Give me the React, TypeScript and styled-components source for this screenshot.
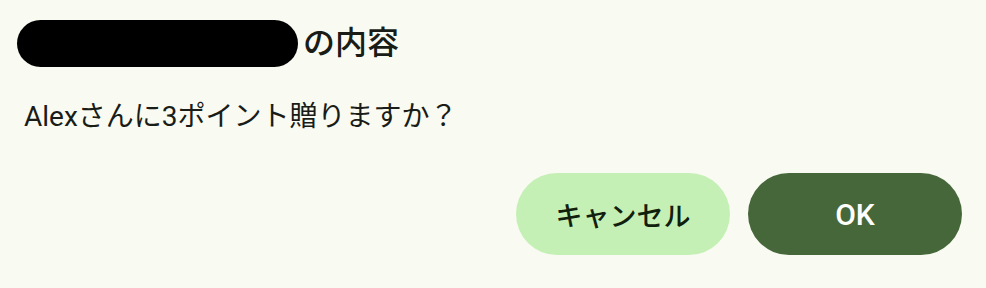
import React from "react";
import styled, { createGlobalStyle } from "styled-components";

const GlobalStyle = createGlobalStyle`
  html, body {
    margin: 0;
    padding: 0;
    background: #f9fbf2;
  }
  body {
    font-family: Roboto, "Noto Sans CJK JP", sans-serif;
    color: #1a1c17;
  }
`;

const Dialog = styled.div`
  width: 986px;
  height: 288px;
  box-sizing: border-box;
  padding: 20px 24px 0 17px;
  display: flex;
  flex-direction: column;
  background: #f9fbf2;
`;

const TitleRow = styled.div`
  display: flex;
  align-items: center;
  height: 47px;
`;

const Redacted = styled.span`
  display: inline-block;
  width: 281px;
  height: 47px;
  border-radius: 24px;
  background: #000;
`;

const TitleText = styled.h2`
  margin: 0 0 0 5px;
  font-size: 32px;
  font-weight: 500;
  line-height: 47px;
  letter-spacing: 0;
`;

const Message = styled.p`
  margin: 30px 0 0 7px;
  font-size: 28px;
  line-height: 40px;
  font-weight: 400;
`;

const Actions = styled.div`
  display: flex;
  justify-content: flex-end;
  gap: 18px;
  margin-top: 36px;
`;

const ActionButton = styled.button<{ $primary?: boolean }>`
  width: 214px;
  height: 82px;
  border: none;
  border-radius: 41px;
  padding: 0;
  font-family: Roboto, "Noto Sans CJK JP", sans-serif;
  font-size: ${(p) => (p.$primary ? "30px" : "27px")};
  font-weight: 500;
  cursor: pointer;
  background: ${(p) => (p.$primary ? "#46673a" : "#c5f0b5")};
  color: ${(p) => (p.$primary ? "#ffffff" : "#10200c")};
`;

export default function App() {
  return (
    <>
      <GlobalStyle />
      <Dialog>
        <TitleRow>
          <Redacted />
          <TitleText>の内容</TitleText>
        </TitleRow>
        <Message>Alexさんに3ポイント贈りますか？</Message>
        <Actions>
          <ActionButton>キャンセル</ActionButton>
          <ActionButton $primary>OK</ActionButton>
        </Actions>
      </Dialog>
    </>
  );
}
